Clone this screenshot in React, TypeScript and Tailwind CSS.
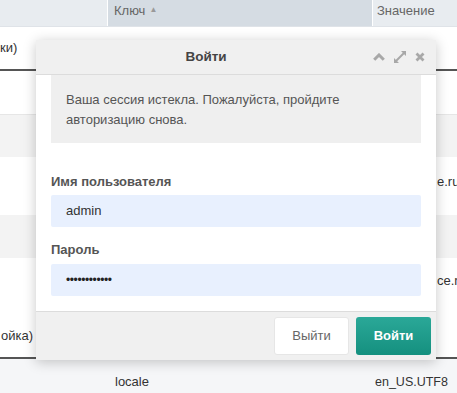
export default function App() {
  const font = { fontFamily: '"Liberation Sans", Arial, sans-serif' };
  return (
    <div className="relative w-[457px] h-[393px] overflow-hidden bg-white text-[13px] text-[#333]" style={font}>
      {/* table behind the dialog */}
      <div className="flex h-[27px] bg-[#e8ecf0] text-[#666] border-b border-[#dfe3e8]">
        <div className="w-[108px] border-r border-white" />
        <div className="w-[265px] bg-[#d5dce3] border-r border-white pl-[6px] pt-[1px] flex items-start gap-1">
          <span>Ключ</span>
          <span className="text-[8px] text-[#999] mt-[3px]">▲</span>
        </div>
        <div className="flex-1 pl-[4px] pt-[1px]">Значение</div>
      </div>
      <div className="h-[42px] flex items-center">
        <span>ки)</span>
      </div>
      <div className="h-[2px] bg-[#555]" />
      <div className="h-[44px] border-b border-[#e6e6e6]" />
      <div className="h-[42px] bg-[#f3f3f3]" />
      <div className="h-[58px] flex items-start pt-[15px] whitespace-nowrap">
        <div className="w-[437px] shrink-0" />
        <span>e.ru.</span>
      </div>
      <div className="h-[43px] bg-[#f3f3f3]" />
      <div className="h-[99px] flex flex-col justify-between">
        <div className="flex pt-[13px] whitespace-nowrap">
          <div className="w-[437px] shrink-0" />
          <span>ce.ru</span>
        </div>
        <div className="pb-[12px] pl-[1px]">ойка)</div>
      </div>
      <div className="h-[2px] bg-[#555]" />
      <div className="h-[40px] bg-[#f5f6f8] flex items-center pt-[6px]">
        <div className="w-[115px]" />
        <div className="w-[260px]">locale</div>
        <div className="text-[12.5px]">en_US.UTF8</div>
      </div>

      {/* login dialog */}
      <div className="absolute left-[36px] top-[40px] w-[400px] bg-white shadow-[0_2px_12px_rgba(0,0,0,0.22)] flex flex-col">
        <div className="h-[35px] bg-[#f0f0f0] border-b border-[#dcdcdc] flex items-center">
          <div className="flex-1 text-center font-bold text-[13.5px] text-[#444] pl-[4px]">Войти</div>
          <div className="w-[64px] flex items-center gap-[8px] pl-[1px]">
            <svg width="12" height="8" viewBox="0 0 12 8">
              <path d="M1.2 6.8 L6 2 L10.8 6.8" fill="none" stroke="#a8a8a8" strokeWidth="3" />
            </svg>
            <svg width="14" height="14" viewBox="0 0 14 14">
              <path d="M8 1 H13 V6 Z M6 13 H1 V8 Z" fill="#a8a8a8" />
              <path d="M11 3 L3 11" stroke="#a8a8a8" strokeWidth="2" />
            </svg>
            <svg width="10" height="10" viewBox="0 0 10 10">
              <path d="M1.5 1.5 L8.5 8.5 M8.5 1.5 L1.5 8.5" stroke="#a8a8a8" strokeWidth="2.8" />
            </svg>
          </div>
        </div>
        <div className="px-[15px] pb-[15px]">
          <div className="bg-[#efefef] px-[15px] pt-[15px] pb-[13px] leading-[20px] text-[#555]">
            Ваша сессия истекла. Пожалуйста, пройдите
            <br />
            авторизацию снова.
          </div>
          <div className="mt-[30px] leading-[18px] font-bold text-[#555]">Имя пользователя</div>
          <div className="mt-[4px] h-[32px] bg-[#e8f0fe] rounded-[2px] flex items-center px-[15px] text-[#333]">admin</div>
          <div className="mt-[14px] leading-[18px] font-bold text-[#555]">Пароль</div>
          <div className="mt-[5px] h-[32px] bg-[#e8f0fe] rounded-[2px] flex items-center px-[15px] text-[#222] text-[12px] tracking-[-0.4px]">
            ••••••••••••
          </div>
        </div>
        <div className="h-[49px] bg-[#f0f0f0] border-t border-[#dcdcdc] flex items-start justify-end gap-[7px] pt-[5px] pr-[5px]">
          <button className="w-[75px] h-[38px] bg-white border border-[#e6e6e6] rounded-[3px] text-[#666]">Выйти</button>
          <button className="w-[75px] h-[38px] bg-gradient-to-b from-[#2aa898] to-[#14907f] rounded-[3px] text-white font-bold">Войти</button>
        </div>
      </div>
    </div>
  );
}
